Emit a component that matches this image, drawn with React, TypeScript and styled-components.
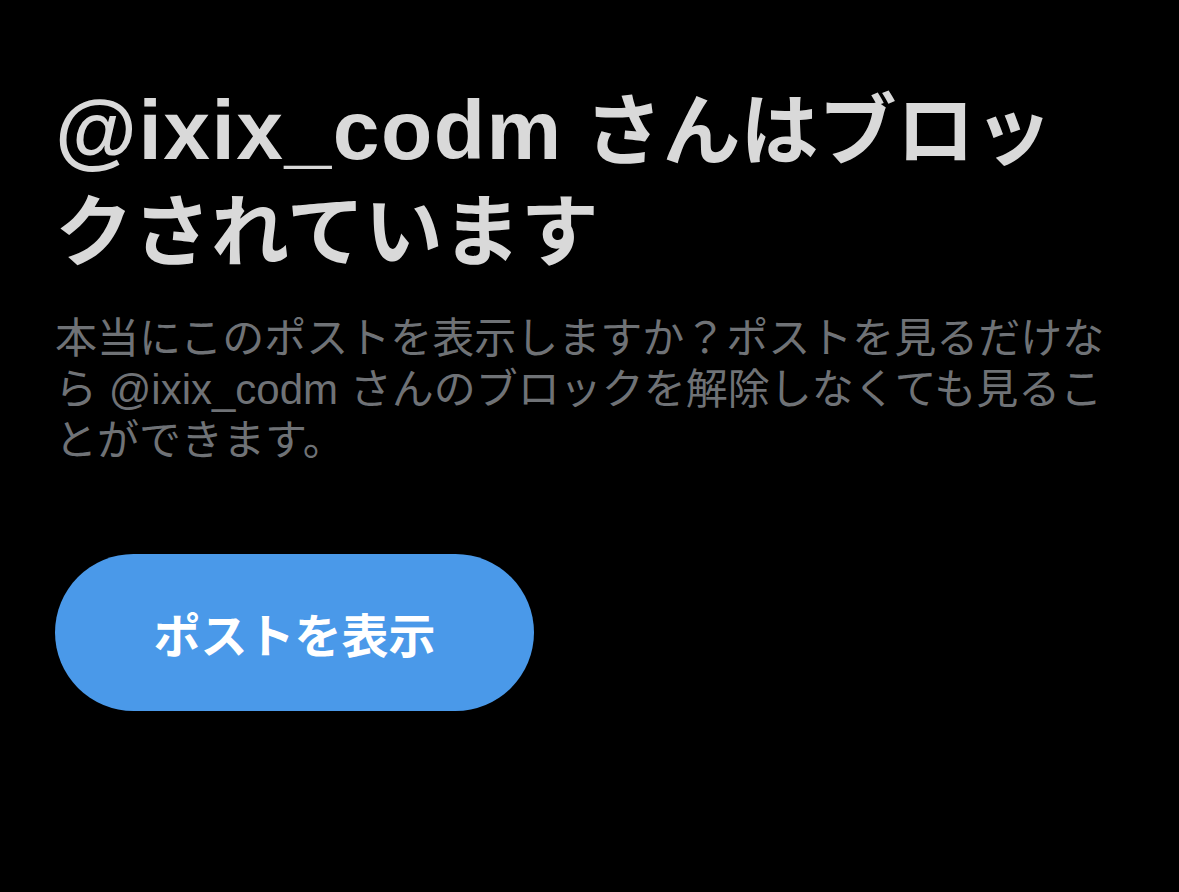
import React from "react";
import styled, { createGlobalStyle } from "styled-components";

const Global = createGlobalStyle`
  html, body { margin: 0; padding: 0; background: #000; }
  body { font-family: "Liberation Sans", "Noto Sans CJK JP", sans-serif; }
`;

const Page = styled.main`
  box-sizing: border-box;
  width: 1179px;
  height: 892px;
  background: #000;
  padding: 80px 55px 0 55px;
  display: flex;
  flex-direction: column;
  align-items: flex-start;
`;

const Title = styled.h1`
  margin: 0;
  max-width: 1060px;
  font-size: 78px;
  line-height: 101px;
  font-weight: 700;
  color: #d9d9d9;
`;

const Handle = styled.span`
  font-family: "Liberation Sans", sans-serif;
  font-size: 84px;
  letter-spacing: 1.5px;
`;

const Rest = styled.span`
  font-family: "Liberation Sans", "Noto Sans CJK JP", sans-serif;
`;

const Body = styled.p`
  margin: 29px 0 0 0;
  font-size: 42px;
  line-height: 51px;
  font-weight: 400;
  color: #6f7276;
`;

const Button = styled.button`
  margin-top: 88px;
  width: 479px;
  height: 157px;
  border: none;
  border-radius: 79px;
  background: #4a99e9;
  color: #fff;
  font-family: "Liberation Sans", "Noto Sans CJK JP", sans-serif;
  font-size: 47px;
  font-weight: 700;
  display: flex;
  align-items: center;
  justify-content: center;
  cursor: pointer;
`;

export default function App() {
  return (
    <>
      <Global />
      <Page>
        <Title>
          <Handle>@ixix_codm</Handle>
          <Rest> さんはブロックされています</Rest>
        </Title>
        <Body>
          本当にこのポストを表示しますか？ポストを見るだけなら @ixix_codm さんのブロックを解除しなくても見ることができます。
        </Body>
        <Button>ポストを表示</Button>
      </Page>
    </>
  );
}
